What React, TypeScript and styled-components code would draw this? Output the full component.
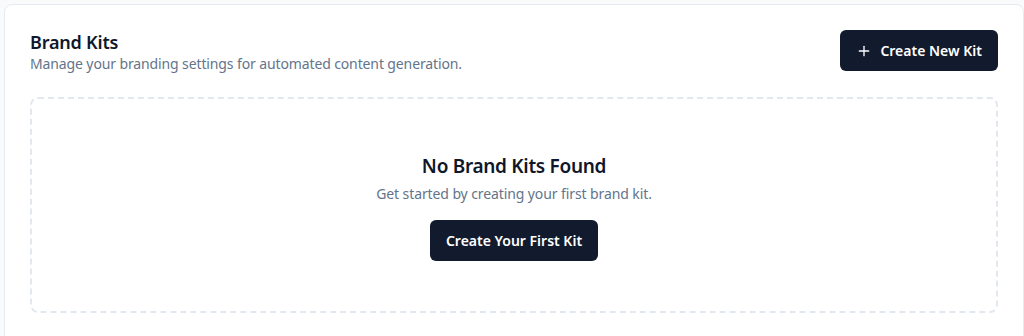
import React from 'react'
import styled, { createGlobalStyle } from 'styled-components'
import { Plus } from 'lucide-react'

const GlobalStyle = createGlobalStyle`
  html, body {
    margin: 0;
    padding: 0;
    height: 100%;
    background-color: #f8fafc;
    font-family: 'Noto Sans', 'Open Sans', sans-serif;
    overflow: hidden;
  }
`

const Page = styled.div`
  height: 100vh;
  overflow: hidden;
  padding: 4px 0 0 4px;
  box-sizing: border-box;
`

const Card = styled.section`
  background-color: white;
  border: 1px solid #e6ebf1;
  border-radius: 8px;
  padding: 25px;
  height: 350px;
  box-sizing: border-box;
`

const Header = styled.header`
  display: flex;
  justify-content: space-between;
  align-items: flex-start;
`

const HeaderText = styled.div`
  display: flex;
  flex-direction: column;
`

const Title = styled.h2`
  margin: 0;
  font-size: 18px;
  line-height: 24px;
  font-weight: 600;
  color: #0f172a;
  letter-spacing: -0.2px;
`

const Subtitle = styled.p`
  margin: 0;
  font-size: 14px;
  line-height: 20px;
  color: #64748b;
  letter-spacing: -0.12px;
`

const Button = styled.button`
  display: inline-flex;
  align-items: center;
  gap: 8px;
  height: 41px;
  padding: 0 16px;
  border: none;
  border-radius: 6px;
  background-color: #121a2d;
  color: white;
  font-family: inherit;
  font-size: 14px;
  font-weight: 600;
  cursor: pointer;
`

const EmptyBox = styled.div`
  margin-top: 23px;
  height: 216px;
  box-sizing: border-box;
  border: 2px dashed #e2e8f0;
  border-radius: 8px;
  display: flex;
  flex-direction: column;
  align-items: center;
  justify-content: center;
  padding-top: 2px;
`

const EmptyTitle = styled.h3`
  margin: 0;
  font-size: 19px;
  line-height: 28px;
  font-weight: 600;
  color: #0f172a;
  letter-spacing: -0.3px;
`

const EmptyText = styled.p`
  margin: 4px 0 16px;
  font-size: 14px;
  line-height: 20px;
  color: #64748b;
  letter-spacing: -0.1px;
`

export default function App() {
  return (
    <Page>
      <GlobalStyle />
      <Card>
        <Header>
          <HeaderText>
            <Title>Brand Kits</Title>
            <Subtitle>Manage your branding settings for automated content generation.</Subtitle>
          </HeaderText>
          <Button>
            <Plus size={16} strokeWidth={2} />
            Create New Kit
          </Button>
        </Header>
        <EmptyBox>
          <EmptyTitle>No Brand Kits Found</EmptyTitle>
          <EmptyText>Get started by creating your first brand kit.</EmptyText>
          <Button>Create Your First Kit</Button>
        </EmptyBox>
      </Card>
    </Page>
  )
}
